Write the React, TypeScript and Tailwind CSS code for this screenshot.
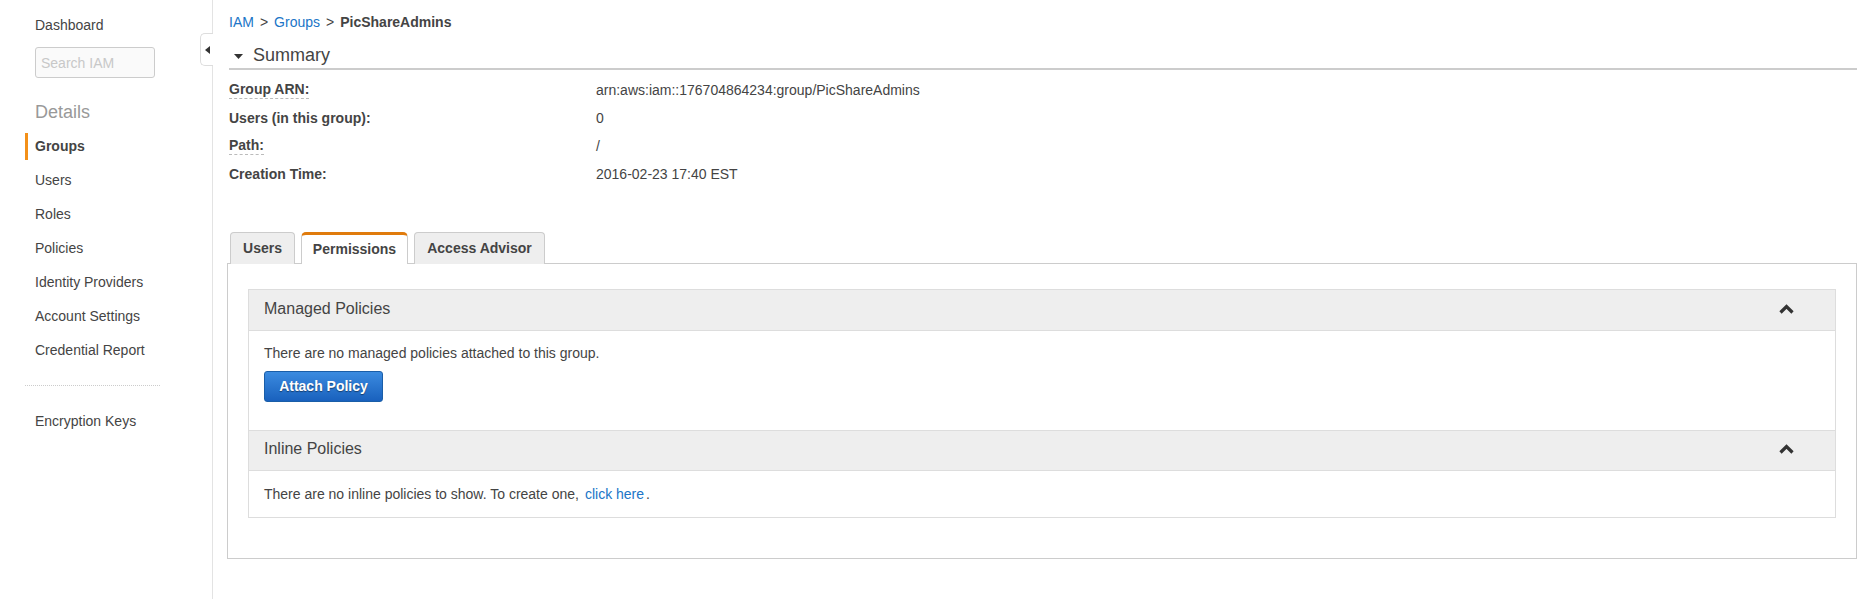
import React from 'react';

const navItems = ['Groups', 'Users', 'Roles', 'Policies', 'Identity Providers', 'Account Settings', 'Credential Report'];

const summaryRows: { label: string; value: string; help?: boolean }[] = [
  { label: 'Group ARN:', value: 'arn:aws:iam::176704864234:group/PicShareAdmins', help: true },
  { label: 'Users (in this group):', value: '0' },
  { label: 'Path:', value: '/', help: true },
  { label: 'Creation Time:', value: '2016-02-23 17:40 EST' },
];

const ChevronUp = () => (
  <svg width="15" height="10" viewBox="0 0 15 10" className="mr-[41px]">
    <polyline points="1.5,8.5 7.5,2.5 13.5,8.5" fill="none" stroke="#333" strokeWidth="3.2" />
  </svg>
);

const Sidebar: React.FC = () => (
  <aside className="w-[213px] shrink-0 border-r border-[#e3e3e3] pt-[15px]">
    <div className="pl-[35px] leading-[20px]">Dashboard</div>
    <input
      placeholder="Search IAM"
      className="mt-[12px] ml-[35px] block h-[31px] w-[120px] rounded-[3px] border border-[#ccc] bg-[#fafafa] px-[5px] text-[14px] outline-none placeholder:text-[#c8c8c8]"
    />
    <div className="mt-[22px] pl-[35px] text-[18px] leading-[24px] text-[#999]">Details</div>
    <ul className="mt-[5px]">
      {navItems.map((item) => (
        <li key={item} className="flex h-[34px] items-center pl-[25px]">
          <span
            className={
              item === 'Groups'
                ? 'border-l-[3px] border-[#f39019] py-[4px] pl-[7px] font-bold leading-[19px]'
                : 'border-l-[3px] border-transparent py-[4px] pl-[7px] leading-[19px]'
            }
          >
            {item}
          </span>
        </li>
      ))}
    </ul>
    <div className="mt-[18px] ml-[25px] w-[135px] border-t border-dotted border-[#ccc]" />
    <div className="mt-[18px] flex h-[34px] items-center pl-[35px]">Encryption Keys</div>
  </aside>
);

export default function App() {
  return (
    <div className="flex min-h-[599px] bg-white font-['Liberation_Sans',Arial,sans-serif] text-[14px] text-[#444]">
      <Sidebar />
      <main className="relative min-w-0 flex-1 pl-[16px] pr-[9px]">
        <div className="absolute top-[33px] -left-[13px] flex h-[33px] w-[13px] items-center justify-center rounded-l-[5px] border border-r-0 border-[#ddd] bg-white">
          <svg width="5" height="8" viewBox="0 0 5 8">
            <polygon points="5,0 5,8 0,4" fill="#333" />
          </svg>
        </div>

        <div className="pt-[12px] leading-[20px]">
          <a className="text-[#2075c7]">IAM</a>
          <span className="mx-[6px]">&gt;</span>
          <a className="text-[#2075c7]">Groups</a>
          <span className="mx-[6px]">&gt;</span>
          <span className="font-bold">PicShareAdmins</span>
        </div>

        <div className="mt-[11px] flex items-center border-b-2 border-[#ccc] pb-[1px]">
          <svg width="9" height="5" viewBox="0 0 9 5" className="ml-[5px] mr-[10px] mt-[2px]">
            <polygon points="0,0 9,0 4.5,5" fill="#333" />
          </svg>
          <span className="text-[18px] leading-[24px]">Summary</span>
        </div>

        <div className="mt-[6px] grid grid-cols-[367px_1fr]">
          {summaryRows.map((row) => (
            <React.Fragment key={row.label}>
              <div className="flex h-[28px] items-center font-bold">
                <span className={row.help ? 'border-b border-dashed border-[#bbb] leading-[17px]' : 'leading-[17px]'}>
                  {row.label}
                </span>
              </div>
              <div className="flex h-[28px] items-center">{row.value}</div>
            </React.Fragment>
          ))}
        </div>

        <div className="mt-[44px] ml-[1px] flex gap-[6px] font-bold">
          <div className="relative z-10 -mb-px flex h-[32px] w-[65px] items-center justify-center rounded-t-[4px] border border-b-0 border-[#ccc] bg-[#eee]">
            Users
          </div>
          <div className="relative z-10 -mb-px flex h-[32px] w-[107px] items-center justify-center rounded-t-[5px] border border-b-0 border-t-[3px] border-[#ccc] border-t-[#e07b0c] bg-white">
            Permissions
          </div>
          <div className="relative z-10 -mb-px flex h-[32px] w-[131px] items-center justify-center rounded-t-[4px] border border-b-0 border-[#ccc] bg-[#eee]">
            Access Advisor
          </div>
        </div>

        <div className="-ml-[2px] border border-[#ccc] px-[20px] pt-[25px] pb-[40px]">
          <div className="border border-[#ddd]">
            <div className="flex h-[41px] items-center justify-between border-b border-[#ddd] bg-[#eee] pb-[3px] pl-[15px] text-[16px]">
              <span>Managed Policies</span>
              <ChevronUp />
            </div>
            <div className="px-[15px] pt-[12px] pb-[28px]">
              <p className="leading-[20px]">There are no managed policies attached to this group.</p>
              <button className="mt-[8px] h-[31px] w-[119px] rounded-[3px] border border-[#1a5ea8] bg-linear-to-b from-[#3b8be0] to-[#1961bd] text-[14px] font-bold text-white [text-shadow:0_1px_1px_rgba(0,0,0,0.45)]">
                Attach Policy
              </button>
            </div>
            <div className="flex h-[41px] items-center justify-between border-y border-[#ddd] bg-[#eee] pb-[3px] pl-[15px] text-[16px]">
              <span>Inline Policies</span>
              <ChevronUp />
            </div>
            <div className="px-[15px] pt-[13px] pb-[13px]">
              <p className="leading-[20px]">
                There are no inline policies to show. To create one,
                <a className="ml-[6px] mr-[2px] text-[#2075c7]">click here</a>.
              </p>
            </div>
          </div>
        </div>
      </main>
    </div>
  );
}
